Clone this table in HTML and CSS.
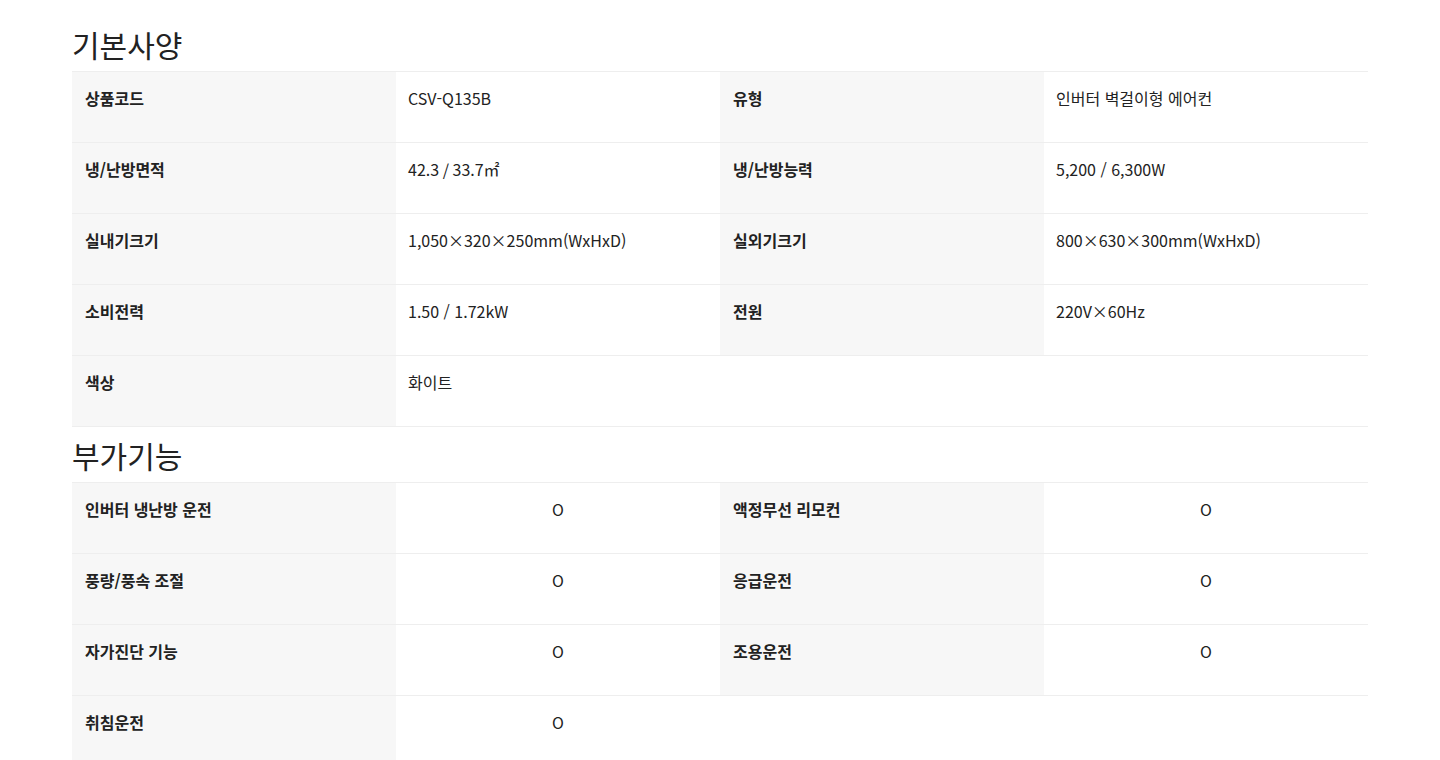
FILE: index.html
```html
<!DOCTYPE html>
<html lang="ko">
<head>
<meta charset="utf-8">
<title>기본사양</title>
<link rel="stylesheet" href="styles.css">
</head>
<body>
<div class="page">
  <h2 class="title">기본사양</h2>
  <div class="spec">
    <div class="th">상품코드</div><div class="td">CSV-Q135B</div>
    <div class="th">유형</div><div class="td">인버터 벽걸이형 에어컨</div>
    <div class="th">냉/난방면적</div><div class="td">42.3 / 33.7㎡</div>
    <div class="th">냉/난방능력</div><div class="td">5,200 / 6,300W</div>
    <div class="th">실내기크기</div><div class="td">1,050×320×250mm(WxHxD)</div>
    <div class="th">실외기크기</div><div class="td">800×630×300mm(WxHxD)</div>
    <div class="th">소비전력</div><div class="td">1.50 / 1.72kW</div>
    <div class="th">전원</div><div class="td">220V×60Hz</div>
    <div class="th">색상</div><div class="td">화이트</div>
    <div class="td"></div><div class="td"></div>
  </div>
  <h2 class="title">부가기능</h2>
  <div class="spec center">
    <div class="th">인버터 냉난방 운전</div><div class="td">O</div>
    <div class="th">액정무선 리모컨</div><div class="td">O</div>
    <div class="th">풍량/풍속 조절</div><div class="td">O</div>
    <div class="th">응급운전</div><div class="td">O</div>
    <div class="th">자가진단 기능</div><div class="td">O</div>
    <div class="th">조용운전</div><div class="td">O</div>
    <div class="th">취침운전</div><div class="td">O</div>
    <div class="td"></div><div class="td"></div>
  </div>
</div>
</body>
</html>
```
FILE: styles.css
```css
html, body {
  margin: 0;
  padding: 0;
  background: #fff;
}
body {
  font-family: "Noto Sans CJK KR", "Noto Sans", sans-serif;
  color: #222;
}
.page {
  margin: 0 72px;
  padding-top: 16px;
}
.title {
  margin: 0;
  height: 55px;
  line-height: 56px;
  font-size: 30px;
  font-weight: 400;
  color: #222;
}
.spec {
  display: grid;
  grid-template-columns: repeat(4, 1fr);
  border-top: 1px solid #eee;
}
.th, .td {
  box-sizing: content-box;
  padding: 15px 12px 0;
  height: 55px;
  border-bottom: 1px solid #eee;
  font-size: 16px;
  line-height: 23px;
}
.th {
  background: #f7f7f7;
  font-weight: 700;
  padding-left: 13px;
}
.td {
  font-weight: 400;
}
.center .td {
  text-align: center;
}
```
